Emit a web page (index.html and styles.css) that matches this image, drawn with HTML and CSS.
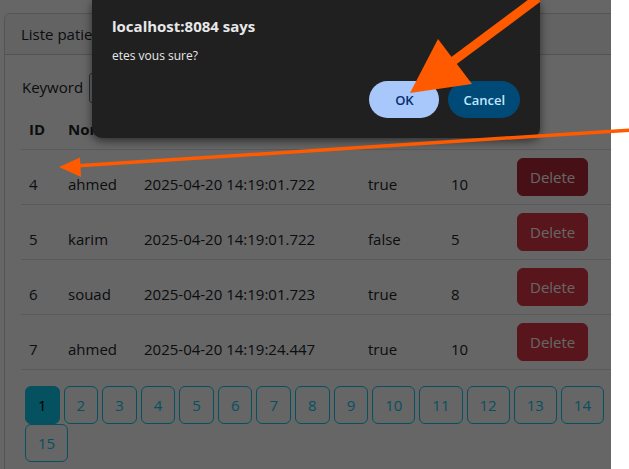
FILE: index.html
```html
<!DOCTYPE html>
<html lang="fr">
<head>
<meta charset="utf-8">
<title>Patients</title>
<link rel="stylesheet" href="styles.css">
</head>
<body>
<div class="screen">
  <div class="page">
    <div class="card">
      <div class="card-header">Liste patients</div>
      <div class="card-body">
        <form class="search">
          <label class="kw-label">Keyword</label>
          <input class="kw-input" type="text">
        </form>
        <table class="table">
          <thead>
            <tr><th class="c-id">ID</th><th class="c-nom">Nom</th><th class="c-date">Date Naissance</th><th class="c-malade">Malade</th><th class="c-score">Score</th><th class="c-act"></th></tr>
          </thead>
          <tbody>
            <tr><td>4</td><td>ahmed</td><td>2025-04-20 14:19:01.722</td><td>true</td><td>10</td><td class="act"><a class="btn-del is-active">Delete</a></td></tr>
            <tr><td>5</td><td>karim</td><td>2025-04-20 14:19:01.722</td><td>false</td><td>5</td><td class="act"><a class="btn-del">Delete</a></td></tr>
            <tr><td>6</td><td>souad</td><td>2025-04-20 14:19:01.723</td><td>true</td><td>8</td><td class="act"><a class="btn-del">Delete</a></td></tr>
            <tr><td>7</td><td>ahmed</td><td>2025-04-20 14:19:24.447</td><td>true</td><td>10</td><td class="act"><a class="btn-del">Delete</a></td></tr>
          </tbody>
        </table>
        <ul class="pages">
          <li><a class="pg active">1</a></li>
          <li><a class="pg">2</a></li>
          <li><a class="pg">3</a></li>
          <li><a class="pg">4</a></li>
          <li><a class="pg">5</a></li>
          <li><a class="pg">6</a></li>
          <li><a class="pg">7</a></li>
          <li><a class="pg">8</a></li>
          <li><a class="pg">9</a></li>
          <li><a class="pg">10</a></li>
          <li><a class="pg">11</a></li>
          <li><a class="pg">12</a></li>
          <li><a class="pg">13</a></li>
          <li><a class="pg">14</a></li>
          <li><a class="pg">15</a></li>
        </ul>
      </div>
    </div>
    <div class="backdrop"></div>
  </div>
  <div class="edge"></div>
</div>

<div class="dialog">
  <div class="dlg-title">localhost:8084 says</div>
  <div class="dlg-msg">etes vous sure?</div>
  <div class="dlg-actions">
    <button type="button" class="dlg-btn dlg-ok">OK</button>
    <button type="button" class="dlg-btn dlg-cancel">Cancel</button>
  </div>
</div>

<svg class="arrows" width="629" height="469" viewBox="0 0 629 469">
  <line x1="538" y1="-2" x2="452" y2="62" stroke="#ff5a00" stroke-width="9"/>
  <polygon points="410,93 438,39 472,84" fill="#ff5a00"/>
  <line x1="632" y1="130" x2="74" y2="166" stroke="#ff5a00" stroke-width="3.5"/>
  <polygon points="59,167 80,157.5 81,177" fill="#ff5a00"/>
</svg>
</body>
</html>
```

FILE: styles.css
```css
* { box-sizing: border-box; }
html, body { margin: 0; padding: 0; }
body {
  width: 629px;
  height: 469px;
  overflow: hidden;
  font-family: "Open Sans", "Noto Sans", sans-serif;
  font-size: 15px;
  line-height: 24px;
  color: #212529;
  background: #fff;
  position: relative;
}
.screen { display: flex; width: 629px; height: 469px; }
.page {
  position: relative;
  width: 611px;
  height: 469px;
  overflow: hidden;
  background: #fff;
  padding: 13px 0 0 4px;
  flex: none;
}
.edge { flex: 1; background: #fff; }

.card {
  width: 638px;
  border: 1px solid rgba(0,0,0,.175);
  border-radius: 6px;
}
.card-header {
  padding: 8px 16px;
  background: rgba(0,0,0,.03);
  border-bottom: 1px solid rgba(0,0,0,.175);
  border-radius: 5px 5px 0 0;
}
.card-body { padding: 16px; }

.search { display: flex; align-items: flex-start; height: 38px; margin: 0; }
.kw-label { margin: 4px 0 0 1px; }
.kw-input {
  margin: 2px 0 0 6px;
  width: 300px;
  height: 30px;
  border: 1px solid #6c757d;
  border-radius: 3px;
  font: inherit;
}

.table {
  width: 100%;
  border-collapse: collapse;
  table-layout: fixed;
  margin-bottom: 16px;
}
.table th, .table td {
  padding: 8px;
  border-bottom: 1px solid #dee2e6;
  text-align: left;
  white-space: nowrap;
  overflow: hidden;
}
.table th {
  font-weight: 700;
  vertical-align: bottom;
  padding: 10px 8px;
  line-height: 20px;
}
.table td { vertical-align: bottom; }
.table td.act { vertical-align: top; }
.c-id { width: 39px; }
.c-nom { width: 76px; }
.c-date { width: 224px; }
.c-malade { width: 83px; }
.c-score { width: 66px; }

.btn-del {
  display: inline-block;
  padding: 6px 12px;
  border: 1px solid #dc3545;
  background: #dc3545;
  color: #fff;
  border-radius: 6px;
  line-height: 24px;
}
.btn-del.is-active { background: #b02a37; border-color: #b02a37; }

.pages {
  list-style: none;
  margin: 0;
  padding: 0;
  display: flex;
  flex-wrap: wrap;
}
.pages li { margin-left: 4px; }
.pg {
  display: block;
  padding: 6px 12px;
  border: 1px solid #0dcaf0;
  color: #0dcaf0;
  border-radius: 6px;
  line-height: 24px;
}
.pg.active { background: #0dcaf0; color: #000; }

.backdrop {
  position: absolute;
  inset: 0;
  background: rgba(0,0,0,.6);
}

.dialog {
  position: absolute;
  left: 92px;
  top: 0;
  width: 448px;
  height: 138px;
  background: #202020;
  border-radius: 0 0 10px 10px;
  box-shadow: 0 3px 10px rgba(0,0,0,.55);
  padding: 16px 20px 0 20px;
  color: #e8e8e8;
}
.dlg-title { font-size: 15px; font-weight: 700; line-height: 20px; }
.dlg-msg { font-size: 12px; line-height: 18px; margin-top: 11px; }
.dlg-actions {
  display: flex;
  justify-content: flex-end;
  gap: 9px;
  margin-top: 16px;
}
.dlg-btn {
  min-width: 70px;
  height: 37px;
  padding: 0 15px;
  border: none;
  border-radius: 19px;
  font-family: "Open Sans", sans-serif;
  font-size: 13px;
  font-weight: 600;
}
.dlg-ok { background: #a8c7fa; color: #062e6f; }
.dlg-cancel { background: #004a77; color: #c2e7ff; }

.arrows { position: absolute; left: 0; top: 0; }
```
